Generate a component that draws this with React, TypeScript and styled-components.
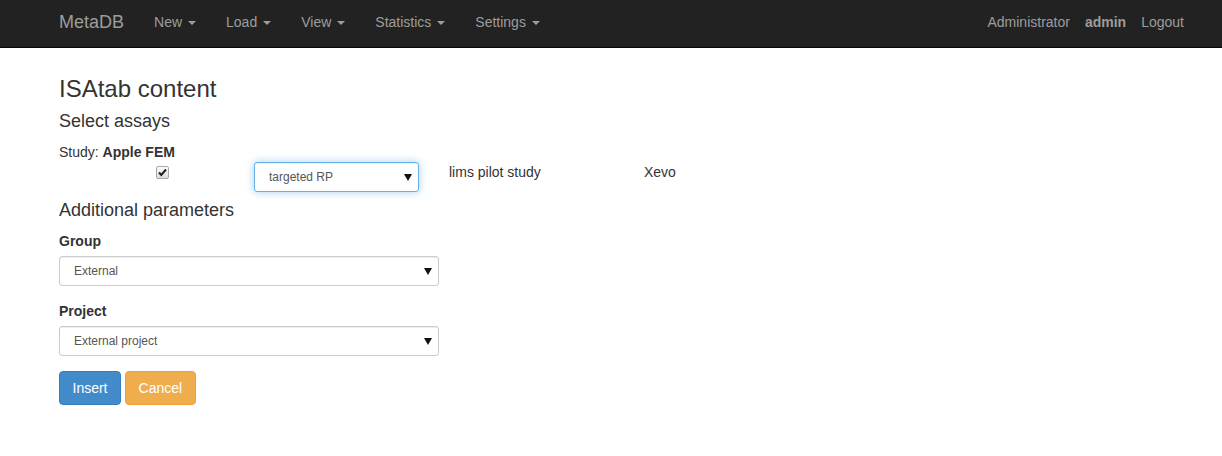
import React from "react";
import styled, { createGlobalStyle } from "styled-components";

const Global = createGlobalStyle`
  html, body { margin: 0; padding: 0; background: #fff; }
  body {
    font-family: "Liberation Sans", Arial, Helvetica, sans-serif;
    font-size: 14px;
    line-height: 20px;
    color: #333;
  }
  * { box-sizing: border-box; }
`;

const Navbar = styled.nav`
  height: 48px;
  background: #222;
  border-bottom: 1px solid #080808;
  display: flex;
  align-items: center;
  justify-content: space-between;
  padding: 0 38px 3px 59px;
`;

const NavLeft = styled.div`
  display: flex;
  align-items: center;
`;

const Brand = styled.a`
  font-size: 18px;
  line-height: 20px;
  color: #9d9d9d;
  text-decoration: none;
  margin-right: 15px;
`;

const NavLink = styled.a`
  color: #9d9d9d;
  text-decoration: none;
  font-size: 14px;
  line-height: 20px;
  padding: 0 15px;
  display: inline-flex;
  align-items: center;
`;

const Caret = styled.span`
  display: inline-block;
  width: 0;
  height: 0;
  margin-left: 6px;
  border-top: 4px solid #9d9d9d;
  border-left: 4px solid transparent;
  border-right: 4px solid transparent;
  margin-top: 1px;
`;

const NavRight = styled.div`
  display: flex;
  align-items: center;
  gap: 15px;
`;

const RightItem = styled.span<{ $bold?: boolean }>`
  color: #9d9d9d;
  font-weight: ${(p) => (p.$bold ? "bold" : "normal")};
`;

const Main = styled.main`
  padding: 28px 59px 0 59px;
`;

const H3 = styled.h3`
  font-size: 24px;
  line-height: 26.4px;
  font-weight: 500;
  margin: 0 0 10px;
`;

const H4 = styled.h4`
  font-size: 18px;
  line-height: 19.8px;
  font-weight: 500;
  margin: 0 0 10px;
`;

const StudyLine = styled.div`
  height: 20px;
`;

const AssayRow = styled.div`
  display: grid;
  grid-template-columns: 195px 195px 195px auto;
  align-items: start;
  height: 30px;
  margin-bottom: 9px;
`;

const CheckCell = styled.div`
  padding: 4px 0 0 97px;
`;

const FakeCheck = styled.span`
  display: block;
  width: 13px;
  height: 13px;
  border: 1px solid #a9a9a9;
  border-radius: 2px;
  background: linear-gradient(#fcfcfc, #dcdcdc);
  position: relative;
`;

const CheckMark = styled.svg`
  position: absolute;
  left: 0;
  top: 0;
`;

const TextCell = styled.div`
  padding-top: 0;
`;

const SelectWrap = styled.div<{ $width: number }>`
  position: relative;
  width: ${(p) => p.$width}px;
`;

const Select = styled.select<{ $focus?: boolean }>`
  appearance: none;
  -webkit-appearance: none;
  width: 100%;
  height: 30px;
  padding: 0 10px 0 14px;
  font-family: "Liberation Sans", Arial, sans-serif;
  font-size: 12px;
  color: #555;
  background: #fff;
  border-radius: 3px;
  border: 1px solid ${(p) => (p.$focus ? "#66afe9" : "#ccc")};
  box-shadow: ${(p) =>
    p.$focus
      ? "inset 0 1px 1px rgba(0,0,0,.075), 0 0 8px rgba(102,175,233,.6)"
      : "inset 0 1px 1px rgba(0,0,0,.075)"};
  outline: none;
`;

const Arrow = styled.svg`
  position: absolute;
  right: 7px;
  top: 12px;
  pointer-events: none;
`;

const Label = styled.label`
  display: block;
  font-weight: bold;
  margin-bottom: 5px;
`;

const FormGroup = styled.div`
  margin-bottom: 15px;
`;

const Buttons = styled.div`
  display: flex;
  gap: 4px;
`;

const Button = styled.button<{ $variant: "primary" | "warning" }>`
  height: 34px;
  padding: 6px 12.5px;
  font-family: "Liberation Sans", Arial, sans-serif;
  font-size: 14px;
  line-height: 20px;
  border-radius: 4px;
  color: #fff;
  background: ${(p) => (p.$variant === "primary" ? "#428bca" : "#f0ad4e")};
  border: 1px solid ${(p) => (p.$variant === "primary" ? "#357ebd" : "#eea236")};
`;

const Dropdown: React.FC<{ width: number; value: string; focus?: boolean }> = ({ width, value, focus }) => (
  <SelectWrap $width={width}>
    <Select $focus={focus} defaultValue={value}>
      <option>{value}</option>
    </Select>
    <Arrow width="8" height="7" viewBox="0 0 8 7">
      <path d="M0 0 H8 L4 7 Z" fill="#111" />
    </Arrow>
  </SelectWrap>
);

export default function App() {
  const menus = ["New", "Load", "View", "Statistics", "Settings"];
  return (
    <>
      <Global />
      <Navbar>
        <NavLeft>
          <Brand href="#">MetaDB</Brand>
          {menus.map((m) => (
            <NavLink key={m} href="#">
              {m}
              <Caret />
            </NavLink>
          ))}
        </NavLeft>
        <NavRight>
          <RightItem>Administrator</RightItem>
          <RightItem $bold>admin</RightItem>
          <RightItem>Logout</RightItem>
        </NavRight>
      </Navbar>
      <Main>
        <H3>ISAtab content</H3>
        <H4>Select assays</H4>
        <StudyLine>
          Study: <b>Apple FEM</b>
        </StudyLine>
        <AssayRow>
          <CheckCell>
            <FakeCheck>
              <CheckMark width="11" height="11" viewBox="0 0 11 11">
                <path d="M2 5.5 L4.3 8 L9 2.5" stroke="#222" strokeWidth="2" fill="none" />
              </CheckMark>
            </FakeCheck>
          </CheckCell>
          <Dropdown width={165} value="targeted RP" focus />
          <TextCell>lims pilot study</TextCell>
          <TextCell>Xevo</TextCell>
        </AssayRow>
        <H4>Additional parameters</H4>
        <FormGroup>
          <Label>Group</Label>
          <Dropdown width={380} value="External" />
        </FormGroup>
        <FormGroup>
          <Label>Project</Label>
          <Dropdown width={380} value="External project" />
        </FormGroup>
        <Buttons>
          <Button $variant="primary">Insert</Button>
          <Button $variant="warning">Cancel</Button>
        </Buttons>
      </Main>
    </>
  );
}
